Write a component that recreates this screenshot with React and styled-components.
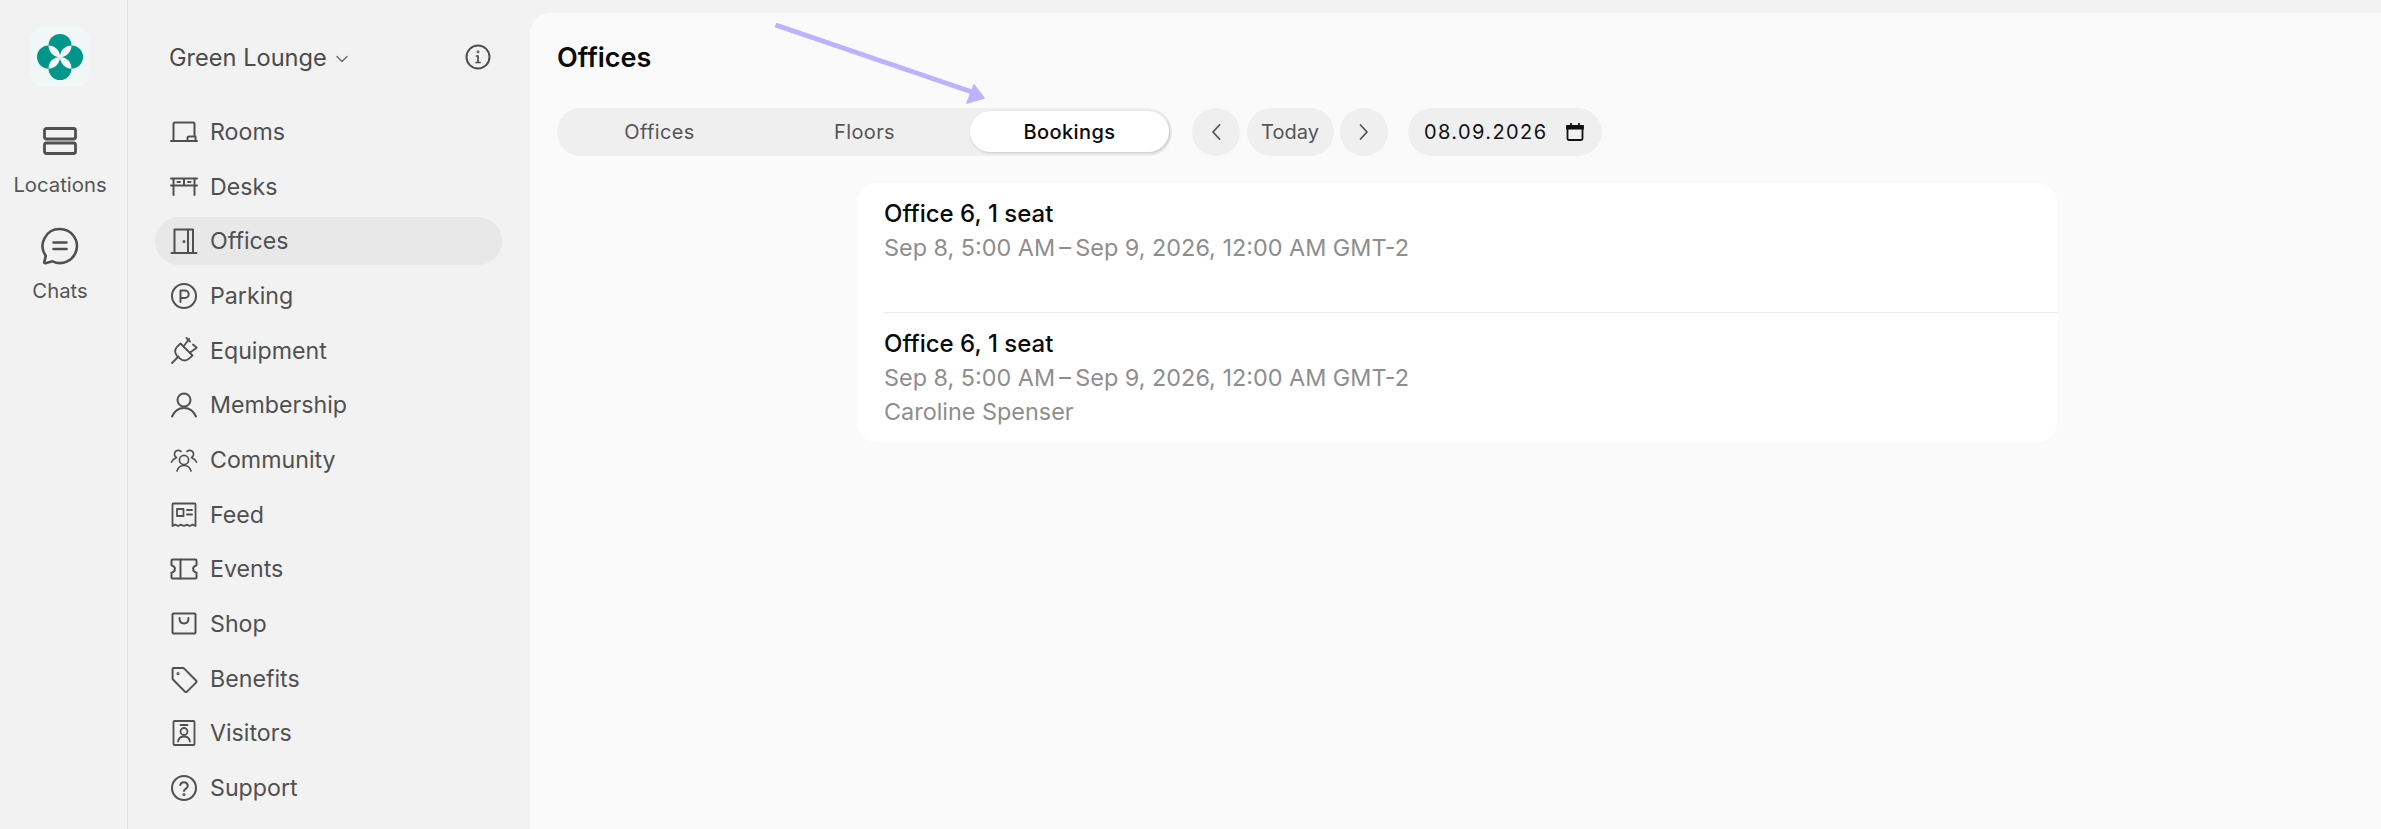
import React from 'react'
import styled, { createGlobalStyle } from 'styled-components'

const GlobalStyle = createGlobalStyle`
  html, body, #root {
    margin: 0;
    height: 100%;
  }
  body {
    background: #f2f2f2;
    font-family: Inter, "Liberation Sans", sans-serif;
    overflow: hidden;
  }
  * {
    box-sizing: border-box;
  }
`

const Icon = ({ children, size = 28, stroke = 2 }) => (
  <svg
    width={size}
    height={size}
    viewBox="0 0 28 28"
    fill="none"
    stroke="currentColor"
    strokeWidth={stroke}
    strokeLinecap="round"
    strokeLinejoin="round"
  >
    {children}
  </svg>
)

const navItems = [
  {
    label: 'Rooms',
    icon: (
      <>
        <path d="M3.5 22.5V6A1.5 1.5 0 0 1 5 4.5h18A1.5 1.5 0 0 1 24.5 6v11.5" />
        <path d="M1 23h26" />
        <path d="M17.5 23v-3a1.5 1.5 0 0 1 1.5-1.5h6.5V23" />
      </>
    ),
  },
  {
    label: 'Desks',
    icon: (
      <>
        <path d="M1 5.5h26M1 12.5h26M3.5 5.5V22M24.5 5.5V22M14 5.5v7" />
        <path d="M7.5 9H10M18 9h2.5" />
      </>
    ),
  },
  {
    label: 'Offices',
    active: true,
    icon: (
      <>
        <path d="M1.5 26h25M4.5 26V2.5H23V26M18 2.5V26" />
        <circle cx="14" cy="14.5" r="0.6" />
      </>
    ),
  },
  {
    label: 'Parking',
    icon: (
      <>
        <circle cx="14" cy="14" r="12" />
        <path d="M10.5 20V8.5H15a3.7 3.7 0 0 1 0 7.4h-4.5" />
      </>
    ),
  },
  {
    label: 'Equipment',
    stroke: 1.8,
    icon: (
      <>
        <path d="M2 26l6.5-6.5" />
        <path d="M10.5 6.5l12 12-3.5 3.2a6.5 6.5 0 0 1-9 0L7 18.8a6.5 6.5 0 0 1 0-9z" />
        <path d="M13.5 9.5L19 2M20 15.5l6.5-4.5M16.5 1L20 4.5M23 7.5l3.5 3" />
      </>
    ),
  },
  {
    label: 'Membership',
    icon: (
      <>
        <circle cx="14" cy="9" r="6.5" />
        <path d="M2 25.5c2-4.5 6-8.5 12-8.5s10 4 12 8.5" />
      </>
    ),
  },
  {
    label: 'Community',
    stroke: 1.7,
    icon: (
      <>
        <circle cx="14" cy="14" r="4.6" />
        <path d="M7 25c1-3.5 3.7-5.5 7-5.5s6 2 7 5.5" />
        <path d="M11 5.5a3.8 3.8 0 1 0-4.5 6c-2 .8-4 2.4-5 4.500" />
        <path d="M17 5.500a3.800 3.800 0 1 1 4.500 6c2 .8 4 2.400 5 4.500" />
      </>
    ),
  },
  {
    label: 'Feed',
    stroke: 1.8,
    icon: (
      <>
        <path d="M2.500 25V3.500a1 1 0 0 1 1-1h21a1 1 0 0 1 1 1V25l-2.900-1.400-2.900 1.400-2.900-1.400-2.800 1.400-2.900-1.400-2.900 1.400-2.900-1.400z" />
        <rect x="7" y="8" width="6.500" height="7" />
        <path d="M17 9h5M17 13.500h5" />
      </>
    ),
  },
  {
    label: 'Events',
    icon: (
      <>
        <path d="M1.500 5.500a1 1 0 0 1 1-1h23a1 1 0 0 1 1 1v4.800c-4.500 1-4.500 6.400 0 7.400v4.800a1 1 0 0 1-1 1h-23a1 1 0 0 1-1-1v-4.800c4.500-1 4.500-6.400 0-7.400z" />
        <path d="M10.500 4.500v19" />
      </>
    ),
  },
  {
    label: 'Shop',
    icon: (
      <>
        <rect x="2.500" y="3.500" width="23" height="20" rx="1" />
        <path d="M9.500 8c0 3.500 2 5.500 4.500 5.500s4.500-2 4.500-5.500" />
      </>
    ),
  },
  {
    label: 'Benefits',
    icon: (
      <>
        <path d="M3.500 3H13a1.500 1.500 0 0 1 1 .4L26 15.500a1.500 1.500 0 0 1 0 2.100L17 26.600a1.500 1.500 0 0 1-2.100 0L3 14.500a1.500 1.500 0 0 1-.4-1V3.900a1 1 0 0 1 .9-.9z" />
        <circle cx="8" cy="8.500" r="0.600" />
      </>
    ),
  },
  {
    label: 'Visitors',
    stroke: 1.8,
    icon: (
      <>
        <rect x="3.500" y="2" width="21" height="24" rx="1" />
        <path d="M10.500 6h7" />
        <circle cx="14" cy="12.500" r="3.500" />
        <path d="M8 22.500c.5-3 3-5 6-5s5.500 2 6 5" />
      </>
    ),
  },
  {
    label: 'Support',
    icon: (
      <>
        <circle cx="14" cy="14" r="12" />
        <path d="M10.200 11a3.900 3.900 0 0 1 7.600 1c0 2.600-3.800 3-3.800 5" />
        <circle cx="14" cy="20.500" r="0.600" />
      </>
    ),
  },
]

const when = 'Sep 8, 5:00 AM\u2009\u2013\u2009Sep 9, 2026, 12:00 AM GMT-2'

const bookings = [
  { id: 1, title: 'Office 6, 1 seat', when, who: '' },
  { id: 2, title: 'Office 6, 1 seat', when, who: 'Caroline Spenser' },
]

export default function App() {
  return (
    <Page>
      <GlobalStyle />
      <Rail>
        <LogoTile>
          <svg width="46" height="46" viewBox="-23 -23 46 46">
            <g fill="#00968a">
              <circle cx="0" cy="-11.5" r="11.5" />
              <circle cx="0" cy="11.5" r="11.5" />
              <circle cx="-11.5" cy="0" r="11.5" />
              <circle cx="11.5" cy="0" r="11.5" />
            </g>
            <g fill="#f4f9f8">
              <path d="M0 0A11.5 11.5 0 0 1 11.5-11.5A11.5 11.5 0 0 1 0 0z" />
              <path d="M0 0A11.5 11.5 0 0 1 11.5 11.5A11.5 11.5 0 0 1 0 0z" />
              <path d="M0 0A11.5 11.5 0 0 1-11.5 11.5A11.5 11.5 0 0 1 0 0z" />
              <path d="M0 0A11.5 11.5 0 0 1-11.5-11.5A11.5 11.5 0 0 1 0 0z" />
            </g>
          </svg>
        </LogoTile>
        <RailItem $top={40} $gap={16}>
          <svg width="36" height="28" viewBox="0 0 36 28" fill="none" stroke="currentColor" strokeWidth="2.8">
            <rect x="2.5" y="1.5" width="31" height="10.5" rx="2" />
            <rect x="2.5" y="16" width="31" height="10.5" rx="2" />
          </svg>
          <RailLabel>Locations</RailLabel>
        </RailItem>
        <RailItem $top={28} $gap={12}>
          <svg width="38" height="38" viewBox="0 0 38 38" fill="none" stroke="currentColor" strokeWidth="2.6" strokeLinecap="round" strokeLinejoin="round">
            <path d="M19 2a17 17 0 1 1-7.5 32.300L4.500 36.200c-1 .2-1.500-.5-1.200-1.300l1.500-6A17 17 0 0 1 19 2z" />
            <path d="M12.500 15.500h13M12.500 22h13" />
          </svg>
          <RailLabel>Chats</RailLabel>
        </RailItem>
      </Rail>

      <Sidebar>
        <SpaceHeader>
          <SpaceName>
            Green Lounge
            <svg width="12" height="8" viewBox="0 0 12 8" fill="none" stroke="#666" strokeWidth="1.3" strokeLinecap="round" strokeLinejoin="round">
              <path d="M1 1.500l5 5 5-5" />
            </svg>
          </SpaceName>
          <InfoButton>
            <svg width="26" height="26" viewBox="0 0 26 26" fill="none" stroke="currentColor" strokeWidth="2" strokeLinecap="round">
              <circle cx="13" cy="13" r="11.5" />
              <path d="M11.500 12H13v6.500M11 18.500h4" strokeWidth="1.7" />
              <circle cx="13" cy="7.8" r="0.5" />
            </svg>
          </InfoButton>
        </SpaceHeader>
        <NavList>
          {navItems.map((item) => (
            <NavItem key={item.label} $active={item.active}>
              <Icon stroke={item.stroke}>{item.icon}</Icon>
              {item.label}
            </NavItem>
          ))}
        </NavList>
      </Sidebar>

      <Panel>
        <Arrow width="230" height="90" viewBox="0 0 230 90">
          <path d="M5.500 2L205 70" stroke="#bdb2ff" strokeWidth="5" fill="none" />
          <path d="M204 62l10 13-17 5z" fill="#bdb2ff" stroke="#bdb2ff" strokeWidth="1.5" strokeLinejoin="round" />
        </Arrow>
        <Title>Offices</Title>
        <Toolbar>
          <Tabs>
            <Tab>Offices</Tab>
            <Tab>Floors</Tab>
            <Tab $active>Bookings</Tab>
          </Tabs>
          <RoundButton>
            <svg width="12" height="18" viewBox="0 0 12 18" fill="none" stroke="currentColor" strokeWidth="1.8" strokeLinecap="round" strokeLinejoin="round">
              <path d="M9.500 2L3 9l6.500 7" />
            </svg>
          </RoundButton>
          <TodayButton>Today</TodayButton>
          <RoundButton>
            <svg width="12" height="18" viewBox="0 0 12 18" fill="none" stroke="currentColor" strokeWidth="1.8" strokeLinecap="round" strokeLinejoin="round">
              <path d="M2.500 2L9 9l-6.500 7" />
            </svg>
          </RoundButton>
          <DateField>
            08.09.2026
            <svg width="18" height="18" viewBox="0 0 18 18" fill="none" stroke="#111" strokeWidth="1.8">
              <rect x="1.5" y="3" width="15" height="14" rx="1.5" />
              <path d="M1 5.500h16V3H1zM5 0v3M13 0v3" fill="#111" />
            </svg>
          </DateField>
        </Toolbar>
        <BookingCard>
          {bookings.map((b) => (
            <BookingRow key={b.id}>
              <BookingTitle>{b.title}</BookingTitle>
              <BookingMeta>{b.when}</BookingMeta>
              <BookingMeta>{b.who}</BookingMeta>
            </BookingRow>
          ))}
        </BookingCard>
      </Panel>
    </Page>
  )
}

const Page = styled.div`
  display: flex;
  height: 100vh;
  width: 100%;
  overflow: hidden;
`

const Rail = styled.aside`
  width: 128px;
  flex: none;
  display: flex;
  flex-direction: column;
  align-items: center;
  padding: 26px 7px 0 0;
  border-right: 1px solid #e2e2e2;
  color: #505050;
`

const LogoTile = styled.div`
  width: 60px;
  height: 61px;
  border-radius: 15px;
  background: #f1f7f6;
  display: flex;
  align-items: center;
  justify-content: center;
`

const RailItem = styled.div`
  display: flex;
  flex-direction: column;
  align-items: center;
  gap: ${(p) => p.$gap}px;
  margin-top: ${(p) => p.$top}px;
`

const RailLabel = styled.span`
  font-size: 20.3px;
  line-height: 28px;
  color: #555;
`

const Sidebar = styled.nav`
  width: 402px;
  flex: none;
  padding: 0 28px 0 27px;
`

const SpaceHeader = styled.div`
  height: 48px;
  margin-top: 33px;
  padding: 0 11px 0 14px;
  display: flex;
  align-items: center;
  justify-content: space-between;
`

const SpaceName = styled.div`
  display: flex;
  align-items: center;
  gap: 9px;
  font-size: 23.6px;
  color: #4a4a4a;

  svg {
    margin-top: 3px;
  }
`

const InfoButton = styled.div`
  display: flex;
  color: #4f4f4f;
`

const NavList = styled.div`
  margin-top: 27px;
  display: flex;
  flex-direction: column;
  gap: 6.67px;
`

const NavItem = styled.div`
  height: 48px;
  padding-left: 15px;
  display: flex;
  align-items: center;
  gap: 12px;
  border-radius: 24px;
  font-size: 23.2px;
  color: #505050;
  background: ${(p) => (p.$active ? '#e8e8e8' : 'transparent')};
`

const Panel = styled.main`
  position: relative;
  flex: 1;
  margin-top: 13px;
  padding: 28px 24px 0 27px;
  background: #fafafa;
  border-top-left-radius: 20px;
  min-width: 0;
`

const Arrow = styled.svg`
  position: absolute;
  left: 240px;
  top: 10px;
  z-index: 2;
`

const Title = styled.h1`
  margin: 0;
  font-size: 27px;
  line-height: 34px;
  font-weight: 600;
  color: #0a0a0a;
`

const Toolbar = styled.div`
  margin-top: 33px;
  display: flex;
  align-items: center;
`

const Tabs = styled.div`
  width: 615px;
  height: 48px;
  margin-right: 20px;
  display: grid;
  grid-template-columns: repeat(3, 1fr);
  background: #efefef;
  border-radius: 24px;
`

const Tab = styled.div`
  display: flex;
  align-items: center;
  justify-content: center;
  font-size: 20px;
  letter-spacing: 0.4px;
  border-radius: 22px;
  color: ${(p) => (p.$active ? '#0a0a0a' : '#555')};
  font-weight: ${(p) => (p.$active ? 500 : 400)};
  background: ${(p) => (p.$active ? '#fff' : 'transparent')};
  margin: ${(p) => (p.$active ? '3px 3px 4px' : '0')};
  box-shadow: ${(p) => (p.$active ? '1px 1px 3px rgba(0, 0, 0, 0.18)' : 'none')};
`

const RoundButton = styled.button`
  width: 48px;
  height: 48px;
  padding: 0;
  border: none;
  border-radius: 50%;
  background: #efefef;
  color: #555;
  display: flex;
  align-items: center;
  justify-content: center;
`

const TodayButton = styled.button`
  width: 87px;
  height: 48px;
  padding: 0;
  margin: 0 6.5px;
  border: none;
  border-radius: 24px;
  background: #efefef;
  font-family: inherit;
  font-size: 20px;
  color: #555;
`

const DateField = styled.div`
  width: 194px;
  height: 48px;
  margin-left: 20px;
  padding: 0 18px 0 16px;
  display: flex;
  align-items: center;
  justify-content: space-between;
  border-radius: 24px;
  background: #efefef;
  font-size: 20px;
  letter-spacing: 1.4px;
  color: #111;
`

const BookingCard = styled.section`
  max-width: 1200px;
  margin: 27px auto 0;
  border-radius: 20px;
  background: #fff;
  overflow: hidden;
`

const BookingRow = styled.div`
  height: 129px;
  margin-left: 27px;
  padding-top: 14px;

  & + & {
    height: 130px;
    border-top: 1px solid #ebebeb;
  }
`

const BookingTitle = styled.div`
  font-size: 24px;
  line-height: 34px;
  font-weight: 500;
  color: #0a0a0a;
`

const BookingMeta = styled.div`
  font-size: 23.4px;
  line-height: 34px;
  min-height: 34px;
  color: #8e8e8e;
`
